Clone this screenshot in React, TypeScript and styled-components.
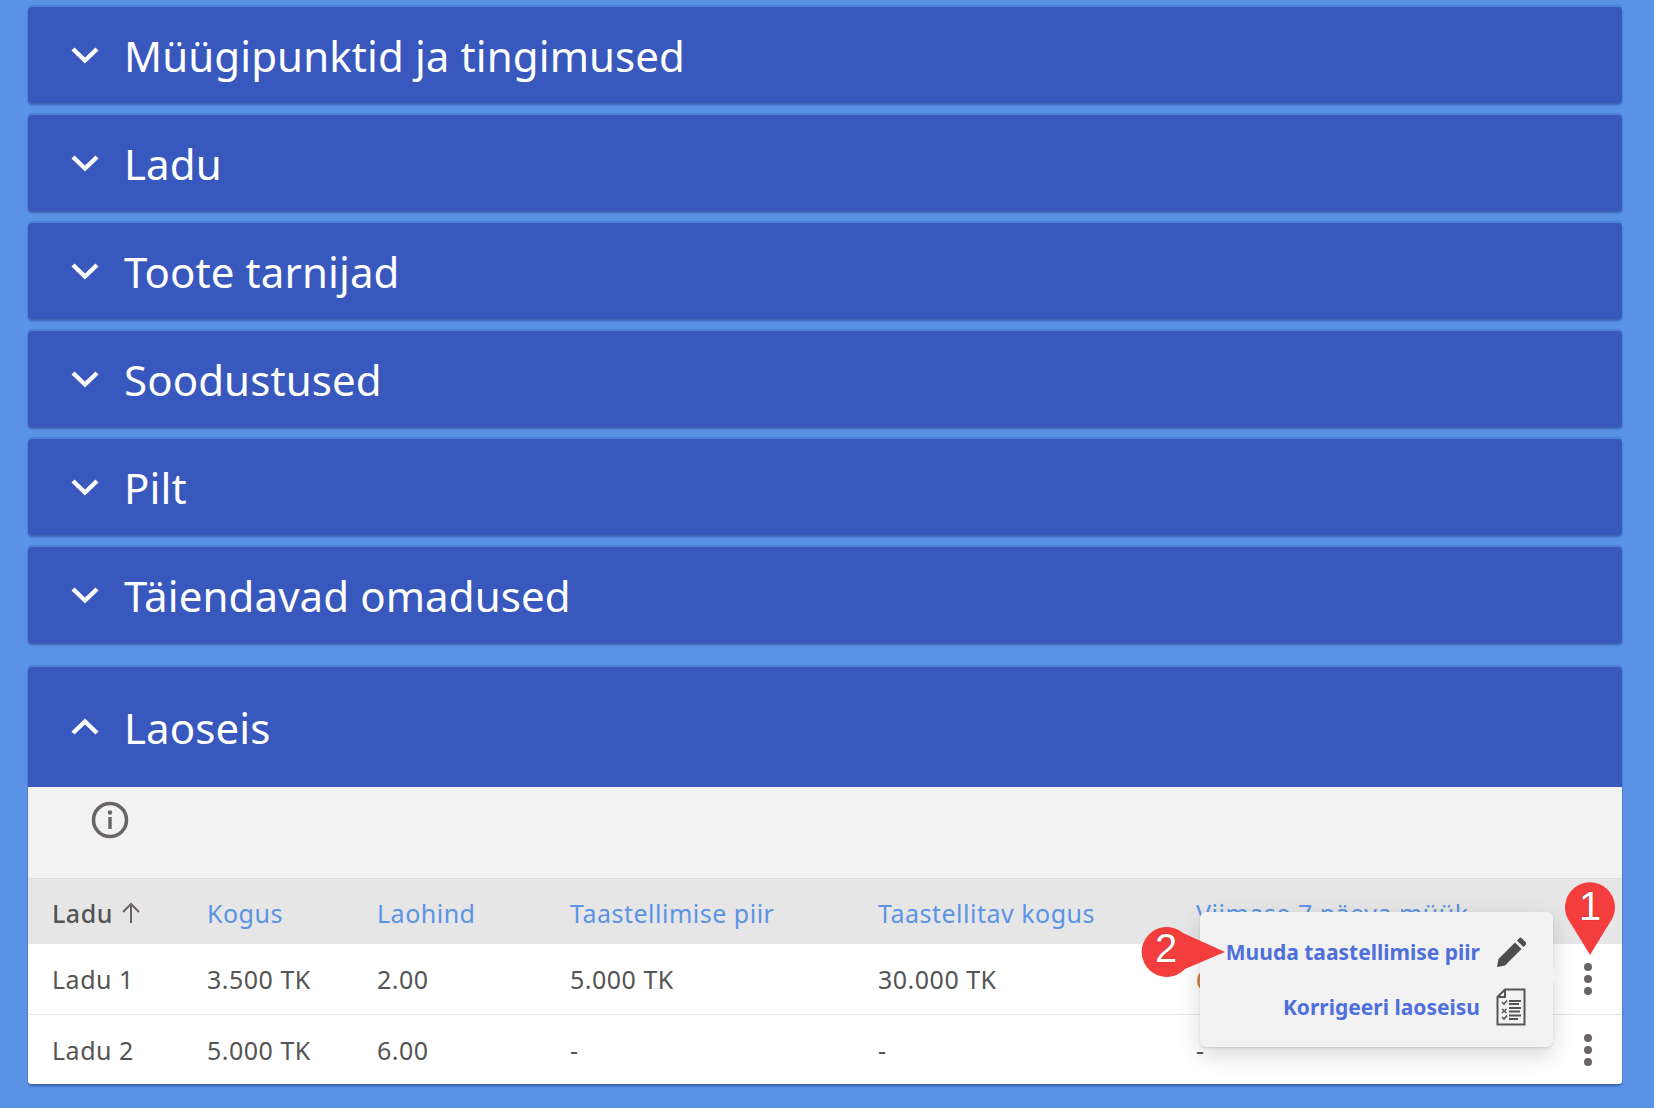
import React from "react";
import styled, { createGlobalStyle } from "styled-components";

const Global = createGlobalStyle`
  html, body { margin: 0; padding: 0; background: #5a92e6; }
  body { font-family: "Noto Sans", "Open Sans", sans-serif; width: 1654px; height: 1108px; overflow: hidden; }
`;

const Page = styled.div`
  position: relative;
  height: 1108px;
  padding: 7px 32px 0 28px;
  box-sizing: border-box;
  display: flex;
  flex-direction: column;
`;

const Panel = styled.section<{ $open?: boolean }>`
  border-radius: 4px;
  background: #3858bd;
  margin-bottom: ${(p) => (p.$open ? 0 : "12px")};
  margin-top: ${(p) => (p.$open ? "12px" : 0)};
  box-shadow: 0 -2px 1px rgba(56, 88, 189, 0.35), 0 2px 2px rgba(20, 40, 110, 0.45);
  overflow: hidden;
`;

const PanelHeader = styled.div<{ $open?: boolean }>`
  height: ${(p) => (p.$open ? "120px" : "96px")};
  display: flex;
  align-items: center;
  padding-left: 43px;
  gap: 25px;
  color: #fff;
`;

const PanelTitle = styled.h2`
  margin: 0;
  font-size: 42px;
  font-weight: 400;
  letter-spacing: 0.1px;
`;

const Chevron = styled.svg`
  width: 28px;
  height: 18px;
  flex: none;
`;

const Body = styled.div`
  background: #fff;
`;

const InfoBar = styled.div`
  height: 92px;
  background: #f2f2f2;
  border-bottom: 1px solid #dedede;
  box-sizing: border-box;
  padding: 14px 0 0 63px;
`;

const InfoIcon = styled.svg`
  width: 38px;
  height: 38px;
  display: block;
`;

const Row = styled.div<{ $head?: boolean; $last?: boolean }>`
  display: grid;
  grid-template-columns: 155px 170px 193px 308px 318px 380px 1fr;
  align-items: center;
  padding-left: 24px;
  height: ${(p) => (p.$head ? "65px" : p.$last ? "69px" : "71px")};
  background: ${(p) => (p.$head ? "#e6e6e6" : "#fff")};
  border-bottom: ${(p) => (p.$head || p.$last ? "none" : "1px solid #e2e2e2")};
  box-sizing: border-box;
  font-size: 25px;
  letter-spacing: 0.5px;
  color: #555;
`;

const HeadCell = styled.div<{ $active?: boolean }>`
  color: ${(p) => (p.$active ? "#555" : "#5b93e6")};
  font-weight: ${(p) => (p.$active ? 500 : 400)};
  display: flex;
  align-items: center;
  gap: 8px;
  white-space: nowrap;
  padding-top: 2px;
`;

const Cell = styled.div<{ $tone?: string }>`
  color: ${(p) => p.$tone || "#555"};
  white-space: nowrap;
`;

const Dots = styled.svg`
  width: 12px;
  height: 34px;
  justify-self: end;
  margin-right: 28px;
`;

const Menu = styled.div`
  position: absolute;
  left: 1200px;
  top: 912px;
  width: 353px;
  height: 135px;
  box-sizing: border-box;
  background: #f2f2f2;
  border-radius: 6px;
  box-shadow: 0 8px 22px rgba(0, 0, 0, 0.16), 0 1px 2px rgba(0, 0, 0, 0.12);
  padding: 21px 27px 0 0;
  display: flex;
  flex-direction: column;
  align-items: flex-end;
  gap: 17px;
  &::after {
    content: "";
    position: absolute;
    right: -5px;
    top: 56px;
    width: 14px;
    height: 14px;
    background: #f2f2f2;
    transform: rotate(45deg);
  }
`;

const MenuItem = styled.div`
  display: flex;
  align-items: center;
  gap: 16px;
  height: 38px;
  font-size: 21px;
  font-weight: 700;
  color: #4f6fdc;
  white-space: nowrap;
`;

const MenuIcon = styled.svg`
  width: 30px;
  height: 38px;
  flex: none;
`;

const Marker = styled.div<{ $x: number; $y: number; $w: number; $h: number }>`
  position: absolute;
  left: ${(p) => p.$x}px;
  top: ${(p) => p.$y}px;
  width: ${(p) => p.$w}px;
  height: ${(p) => p.$h}px;
  z-index: 3;
`;

const MarkerShape = styled.svg`
  position: absolute;
  inset: 0;
  width: 100%;
  height: 100%;
`;

const MarkerNumber = styled.span<{ $cx: number; $cy: number }>`
  position: absolute;
  left: ${(p) => p.$cx}px;
  top: ${(p) => p.$cy}px;
  transform: translate(-50%, -50%);
  font-family: "Liberation Sans", Arial, sans-serif;
  font-size: 40px;
  line-height: 1;
  color: #fff;
  text-shadow: 0 0 1px rgba(0, 0, 0, 0.55);
`;

const Down = () => (
  <Chevron viewBox="0 0 28 18">
    <path d="M2 3 L14 14.5 L26 3" fill="none" stroke="#fff" strokeWidth="4.4" />
  </Chevron>
);
const Up = () => (
  <Chevron viewBox="0 0 28 18">
    <path d="M2 15 L14 3.5 L26 15" fill="none" stroke="#fff" strokeWidth="4.4" />
  </Chevron>
);

const DotsIcon = () => (
  <Dots viewBox="0 0 12 34">
    <circle cx="6" cy="5" r="4" fill="#6a6468" />
    <circle cx="6" cy="17" r="4" fill="#6a6468" />
    <circle cx="6" cy="29" r="4" fill="#6a6468" />
  </Dots>
);

const collapsed = [
  "Müügipunktid ja tingimused",
  "Ladu",
  "Toote tarnijad",
  "Soodustused",
  "Pilt",
  "Täiendavad omadused",
];

export default function App() {
  return (
    <Page>
      <Global />
      {collapsed.map((t) => (
        <Panel key={t}>
          <PanelHeader>
            <Down />
            <PanelTitle>{t}</PanelTitle>
          </PanelHeader>
        </Panel>
      ))}
      <Panel $open>
        <PanelHeader $open>
          <Up />
          <PanelTitle>Laoseis</PanelTitle>
        </PanelHeader>
        <Body>
          <InfoBar>
            <InfoIcon viewBox="0 0 38 38">
              <circle cx="19" cy="19" r="16.5" fill="none" stroke="#6a6468" strokeWidth="3.6" />
              <circle cx="19" cy="11.5" r="2.2" fill="#6a6468" />
              <rect x="17.3" y="16" width="3.4" height="12" fill="#6a6468" />
            </InfoIcon>
          </InfoBar>
          <Row $head>
            <HeadCell $active>
              Ladu
              <svg width="20" height="22" viewBox="0 0 20 22">
                <path d="M10 21 V3 M2 10 L10 2 L18 10" fill="none" stroke="#6a6468" strokeWidth="2" />
              </svg>
            </HeadCell>
            <HeadCell>Kogus</HeadCell>
            <HeadCell>Laohind</HeadCell>
            <HeadCell>Taastellimise piir</HeadCell>
            <HeadCell>Taastellitav kogus</HeadCell>
            <HeadCell>Viimase 7 päeva müük</HeadCell>
            <div />
          </Row>
          <Row>
            <Cell>Ladu 1</Cell>
            <Cell>3.500 TK</Cell>
            <Cell>2.00</Cell>
            <Cell>5.000 TK</Cell>
            <Cell>30.000 TK</Cell>
            <Cell $tone="#c97a3a">6 TK</Cell>
            <DotsIcon />
          </Row>
          <Row $last>
            <Cell>Ladu 2</Cell>
            <Cell>5.000 TK</Cell>
            <Cell>6.00</Cell>
            <Cell>-</Cell>
            <Cell>-</Cell>
            <Cell>-</Cell>
            <DotsIcon />
          </Row>
        </Body>
      </Panel>

      <Menu>
        <MenuItem>
          Muuda taastellimise piir
          <MenuIcon viewBox="0 0 30 38">
            <path
              d="M1 34 L2.5 26 L19 9.5 L25.5 16 L9 32.5 Z M21 7.5 L23.5 5 Q24.5 4 25.5 5 L30 9.5 Q31 10.5 30 11.5 L27.5 14 Z"
              fill="#4d4d4d"
            />
          </MenuIcon>
        </MenuItem>
        <MenuItem>
          Korrigeeri laoseisu
          <MenuIcon viewBox="0 0 30 38">
            <path d="M9 1.5 H28.5 V36.5 H1.5 V9 Z" fill="none" stroke="#555" strokeWidth="2" />
            <path d="M9 1.5 V9 H1.5" fill="none" stroke="#555" strokeWidth="2" />
            <path d="M6 14 L8 16 L11 12.5 M6 21 L10.5 25 M10.5 21 L6 25 M6 29 L8 31 L11 27.5" fill="none" stroke="#555" strokeWidth="1.6" />
            <path d="M13 13 H25 M13 16 H23 M13 20 H25 M13 23.5 H24 M13 27.5 H25 M13 31 H22" stroke="#555" strokeWidth="1.8" />
          </MenuIcon>
        </MenuItem>
      </Menu>

      <Marker $x={1564} $y={880} $w={52} $h={76}>
        <MarkerShape viewBox="0 0 52 76">
          <path d="M26 75 L6.5 43 A25 25 0 1 1 45.5 43 Z" fill="#f43e3e" />
        </MarkerShape>
        <MarkerNumber $cx={26} $cy={26}>1</MarkerNumber>
      </Marker>
      <Marker $x={1141} $y={927} $w={85} $h={50}>
        <MarkerShape viewBox="0 0 85 50">
          <path d="M84 25 L44 42 A25 25 0 1 1 42 6 Z" fill="#f43e3e" />
        </MarkerShape>
        <MarkerNumber $cx={25} $cy={21}>2</MarkerNumber>
      </Marker>
    </Page>
  );
}
